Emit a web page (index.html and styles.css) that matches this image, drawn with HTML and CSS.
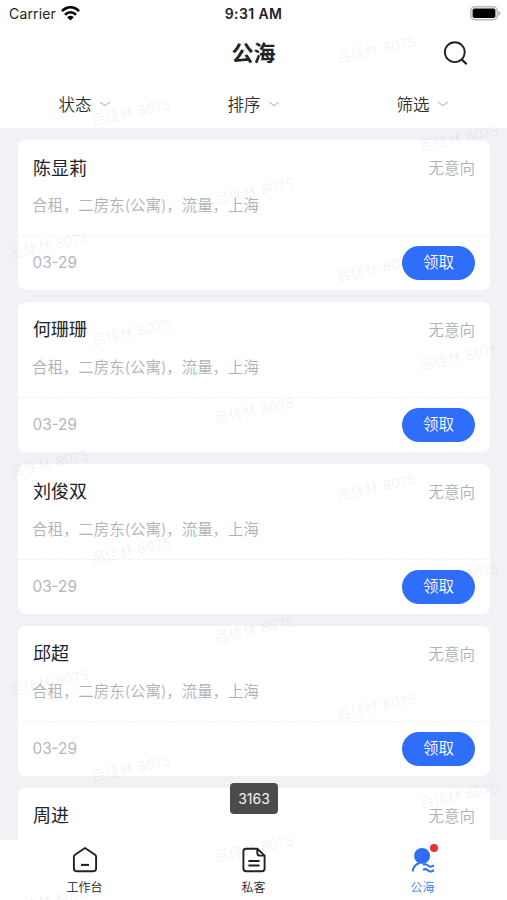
FILE: index.html
```html
<!DOCTYPE html>
<html lang="zh-CN">
<head>
<meta charset="utf-8">
<title>公海</title>
<link rel="stylesheet" href="styles.css">
</head>
<body>
<div class="app">
  <header class="header">
    <div class="status">
      <div class="carrier">Carrier
        <svg class="wifi" width="19" height="15" viewBox="0 0 19 15" fill="none" stroke="#000" stroke-width="2.6"><path d="M1 5.2C6-.1 13-.1 18 5.2M4 8.7c3.3-3.1 7.7-3.1 11 0"/><path d="M6.2 11.2c2-1.9 4.6-1.9 6.6 0l-3.3 3.3z" fill="#000" stroke="none"/></svg>
      </div>
      <div class="time">9:31 AM</div>
      <svg class="battery" width="31" height="15" viewBox="0 0 31 15"><rect x=".8" y=".8" width="26.4" height="13" rx="3.8" fill="#fff" stroke="#b9b9b9" stroke-width="1.5"/><rect x="2.6" y="2.6" width="22.8" height="9.4" rx="1.8"/><path d="M28.4 5c2.6 1.2 2.6 3.6 0 4.8z" fill="#aaa"/></svg>
    </div>
    <div class="navbar">
      <h1 class="title">公海</h1>
      <svg class="search" width="25" height="25" viewBox="0 0 25 25" fill="none" stroke="#1d2023" stroke-width="1.9"><circle cx="11.8" cy="11.2" r="9.9"/><path d="m18.6 18.2 5 5" stroke-width="2.2"/></svg>
    </div>
    <div class="filters">
      <div class="filter">状态<svg class="chevron" viewBox="0 0 12 6"><path d="m1 1 5 3.6L11 1"/></svg></div>
      <div class="filter">排序<svg class="chevron" viewBox="0 0 12 6"><path d="m1 1 5 3.6L11 1"/></svg></div>
      <div class="filter">筛选<svg class="chevron" viewBox="0 0 12 6"><path d="m1 1 5 3.6L11 1"/></svg></div>
    </div>
  </header>

  <main class="list">
    <article class="card">
      <div class="row"><h2 class="name">陈显莉</h2><span class="intent">无意向</span></div>
      <p class="desc">合租，二房东(公寓)，流量，上海</p>
      <div class="foot"><span class="date">03-29</span><button class="claim">领取</button></div>
    </article>
    <article class="card">
      <div class="row"><h2 class="name">何珊珊</h2><span class="intent">无意向</span></div>
      <p class="desc">合租，二房东(公寓)，流量，上海</p>
      <div class="foot"><span class="date">03-29</span><button class="claim">领取</button></div>
    </article>
    <article class="card">
      <div class="row"><h2 class="name">刘俊双</h2><span class="intent">无意向</span></div>
      <p class="desc">合租，二房东(公寓)，流量，上海</p>
      <div class="foot"><span class="date">03-29</span><button class="claim">领取</button></div>
    </article>
    <article class="card">
      <div class="row"><h2 class="name">邱超</h2><span class="intent">无意向</span></div>
      <p class="desc">合租，二房东(公寓)，流量，上海</p>
      <div class="foot"><span class="date">03-29</span><button class="claim">领取</button></div>
    </article>
    <article class="card">
      <div class="row"><h2 class="name">周进</h2><span class="intent">无意向</span></div>
    </article>
  </main>

  <nav class="tabs">
    <div class="tab">
      <svg class="icon" viewBox="0 0 28 28" fill="none" stroke="#1f2225" stroke-width="1.9" stroke-linejoin="round"><path d="M14 2 4 8.7Q2.9 9.5 2.9 10.7v11.9q0 2.6 2.6 2.6h17q2.6 0 2.6-2.6V10.7q0-1.2-1.1-2z"/><path d="M10 18.9h8" stroke-width="2.1"/></svg>
      <span>工作台</span>
    </div>
    <div class="tab">
      <svg class="icon" viewBox="0 0 28 28" fill="none" stroke="#1f2225" stroke-width="1.9" stroke-linejoin="round"><path d="M17.3 2.7H6.1q-2.7 0-2.7 2.7v17.1q0 2.7 2.7 2.7h15.8q2.7 0 2.7-2.7V9.6z"/><path d="M17.3 2.7v4.2q0 2.7 2.7 2.7h4.6M8.4 15h11.2M8.4 19.5h11.2"/></svg>
      <span>私客</span>
    </div>
    <div class="tab active">
      <svg class="icon" viewBox="0 0 28 28" fill="none" stroke="#2f6df6" stroke-width="2"><circle cx="13.1" cy="9.9" r="8" fill="#2f6df6" stroke="none"/><path d="M3.6 25.5c.6-4.4 3-7.4 7-8.5M14 19c1.6-1 3.6-1 5.2.6s3.4 1.4 5.8-.4M14 23.9c1.6-1 3.6-1 5.2.6s3.4 1.4 5.8-.4"/></svg>
      <span>公海</span>
      <i class="dot"></i>
    </div>
  </nav>

  <svg class="watermark" width="507" height="900" aria-hidden="true">
    <defs><text id="mark" transform="rotate(-11.5)" text-anchor="middle" y="6.5">吕佳林 8075</text></defs>
    <use href="#mark" x="376" y="48"/><use href="#mark" x="131" y="111"/><use href="#mark" x="459" y="137"/>
    <use href="#mark" x="254" y="190"/><use href="#mark" x="49" y="244"/><use href="#mark" x="376" y="267"/>
    <use href="#mark" x="131" y="331"/><use href="#mark" x="459" y="356"/><use href="#mark" x="254" y="409"/>
    <use href="#mark" x="49" y="462"/><use href="#mark" x="376" y="486"/><use href="#mark" x="131" y="549"/>
    <use href="#mark" x="459" y="575"/><use href="#mark" x="254" y="628"/><use href="#mark" x="49" y="681"/>
    <use href="#mark" x="376" y="705"/><use href="#mark" x="131" y="767"/><use href="#mark" x="459" y="794"/>
    <use href="#mark" x="254" y="847"/><use href="#mark" x="49" y="899"/>
  </svg>

  <div class="toast">3163</div>
</div>
</body>
</html>
```

FILE: styles.css
```css
* { box-sizing: border-box; margin: 0; padding: 0; }

body {
  font-family: Inter, "Noto Sans CJK SC", sans-serif;
  background: #f0f2f5;
  color: #202326;
}

.app {
  position: relative;
  display: flex;
  flex-direction: column;
  height: 900px;
  overflow: hidden;
}

.header { flex: none; height: 128px; background: #fff; }

.status {
  display: grid;
  grid-template-columns: 1fr auto 1fr;
  align-items: center;
  height: 28px;
  padding: 0 6px 0 9px;
  font-size: 14px;
  line-height: 28px;
}
.carrier { display: flex; align-items: center; gap: 5px; letter-spacing: 0.15px; }
.wifi { margin-top: -2px; }
.time { font-weight: 600; font-size: 14px; letter-spacing: 0.4px; margin-left: -3px; }
.battery { justify-self: end; margin-top: -2px; }

.navbar {
  display: grid;
  grid-template-columns: 1fr auto 1fr;
  align-items: center;
  height: 50px;
  padding: 0 39px;
}
.title { grid-column: 2; font-size: 22px; line-height: 30px; font-weight: 700; }
.search { justify-self: end; }

.filters { display: grid; grid-template-columns: repeat(3, 1fr); height: 50px; padding-top: 1px; }
.filter {
  display: flex;
  align-items: center;
  justify-content: center;
  gap: 7px;
  font-size: 16.5px;
  font-weight: 350;
  color: #2d3033;
}
.chevron { width: 12px; height: 6px; margin-top: 1px; fill: none; stroke: #c6c9cd; stroke-width: 1.3; }

.list {
  flex: 1;
  min-height: 0;
  overflow: hidden;
  display: flex;
  flex-direction: column;
  gap: 12px;
  padding: 12px 17px 0 18px;
}

.card { flex: none; height: 149.9px; border-radius: 8px; background: #fff; }
.row {
  display: flex;
  align-items: center;
  justify-content: space-between;
  height: 55px;
  padding: 0 15px;
}
.name { margin-top: 2px; font-size: 18px; font-weight: 400; line-height: 26px; }
.intent { margin-top: -1px; font-size: 15.5px; font-weight: 350; color: #adb2b9; }
.desc {
  height: 40.4px;
  padding: 0 14px;
  font-size: 15.45px;
  font-weight: 350;
  line-height: 22px;
  color: #adb2b9;
}
.foot {
  display: flex;
  align-items: center;
  justify-content: space-between;
  height: 54px;
  padding: 0 15px 0 14.5px;
  border-top: 1px dashed #f0f1f3;
}
.date { font-size: 15.3px; color: #b2b7bd; }
.claim {
  width: 73px;
  height: 34px;
  border: 0;
  border-radius: 17px;
  background: #2f6dfb;
  color: #fff;
  font: inherit;
  font-size: 15.5px;
  font-weight: 350;
  line-height: 34px;
}

.tabs {
  flex: none;
  display: grid;
  grid-template-columns: repeat(3, 1fr);
  height: 60px;
  background: #fff;
}
.tab {
  position: relative;
  display: flex;
  flex-direction: column;
  align-items: center;
  padding-top: 6px;
  gap: 5px;
  font-size: 12px;
  font-weight: 350;
  line-height: 18px;
}
.icon { width: 28px; height: 28px; }
.active { color: #3f76f5; }
.dot {
  position: absolute;
  top: 4px;
  left: calc(50% + 7px);
  width: 8px;
  height: 8px;
  border-radius: 50%;
  background: #e9312b;
}

.toast {
  position: absolute;
  left: 230px;
  top: 783px;
  width: 48px;
  height: 31px;
  border-radius: 4px;
  background: #4b4b4b;
  color: #f4f4f4;
  font-size: 14px;
  line-height: 31px;
  text-align: center;
}

.watermark {
  position: absolute;
  inset: 0;
  pointer-events: none;
  font-size: 14.2px;
  fill: rgba(70, 75, 80, 0.07);
}
```
